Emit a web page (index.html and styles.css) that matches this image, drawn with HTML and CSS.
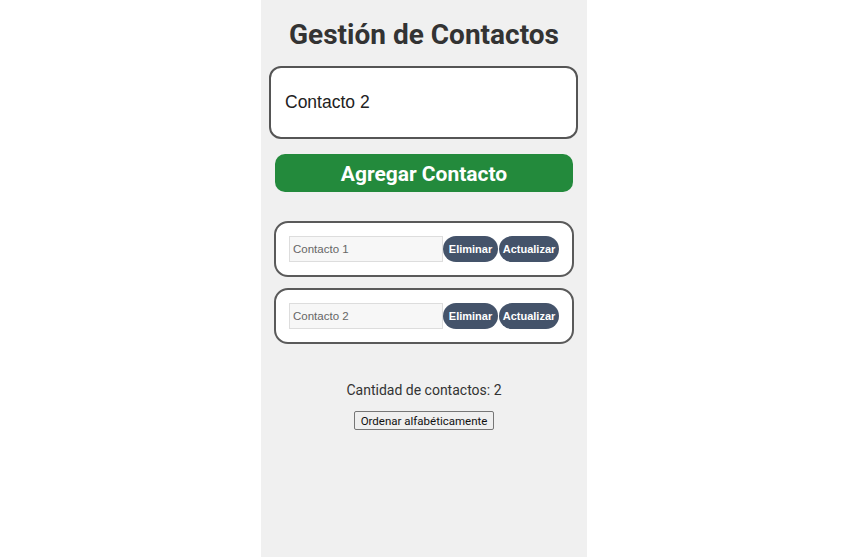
FILE: index.html
```html
<!DOCTYPE html>
<html lang="es">
<head>
<meta charset="utf-8">
<title>Gestión de Contactos</title>
<link rel="stylesheet" href="styles.css">
</head>
<body>
<div class="app">
  <h1 class="title">Gestión de Contactos</h1>
  <input class="new-input" type="text" value="Contacto 2">
  <button class="add-btn">Agregar Contacto</button>
  <ul class="list">
    <li class="card">
      <input class="name" type="text" value="Contacto 1">
      <button class="pill pill-del">Eliminar</button>
      <button class="pill pill-upd">Actualizar</button>
    </li>
    <li class="card">
      <input class="name" type="text" value="Contacto 2">
      <button class="pill pill-del">Eliminar</button>
      <button class="pill pill-upd">Actualizar</button>
    </li>
  </ul>
  <p class="count">Cantidad de contactos: 2</p>
  <div class="sort-row"><button class="sort-btn">Ordenar alfabéticamente</button></div>
</div>
</body>
</html>
```
FILE: styles.css
```css
html, body {
  margin: 0;
  padding: 0;
  background: #ffffff;
}
body {
  font-family: Roboto, "Liberation Sans", Arial, sans-serif;
}
.app {
  width: 326px;
  min-height: 557px;
  margin: 0 auto;
  background: #f0f0f0;
  display: flex;
  flex-direction: column;
  box-sizing: border-box;
  padding-top: 19px;
}
.title {
  margin: 0;
  font-size: 28px;
  line-height: 32px;
  font-weight: 700;
  color: #333333;
  text-align: center;
}
.new-input {
  margin: 15px 8px 0 8px;
  width: 309px;
  height: 73px;
  box-sizing: border-box;
  border: 2px solid #555555;
  border-radius: 12px;
  background: #ffffff;
  padding: 0 14px;
  font-family: "Liberation Sans", Arial, sans-serif;
  font-size: 17.5px;
  color: #222222;
  outline: none;
}
.add-btn {
  margin: 15px 14px 0 14px;
  width: 298px;
  height: 38px;
  border: none;
  border-radius: 10px;
  background: #238a3c;
  color: #ffffff;
  font-family: Roboto, "Liberation Sans", Arial, sans-serif;
  font-weight: 700;
  font-size: 21px;
  padding: 1px 0 0 0;
}
.list {
  list-style: none;
  margin: 29px 13px 0 13px;
  padding: 0;
  display: flex;
  flex-direction: column;
  gap: 11px;
}
.card {
  width: 300px;
  height: 56px;
  box-sizing: border-box;
  border: 2px solid #5a5a5a;
  border-radius: 14px;
  background: #ffffff;
  display: flex;
  align-items: center;
  padding: 0 13px;
}
.name {
  width: 154px;
  height: 26px;
  box-sizing: border-box;
  border: 1px solid #dddddd;
  background: #f7f7f7;
  padding: 0 3px;
  font-family: "Liberation Sans", Arial, sans-serif;
  font-size: 11.5px;
  color: #666666;
  outline: none;
}
.pill {
  height: 26px;
  border: none;
  border-radius: 13px;
  background: #44536a;
  color: #ffffff;
  font-family: "Liberation Sans", Arial, sans-serif;
  font-weight: 700;
  font-size: 11px;
  padding: 0;
  margin: 0;
  text-align: center;
}
.pill-del {
  width: 55px;
}
.pill-upd {
  width: 60px;
  margin-left: 1px;
}
.count {
  margin: 37px 0 0 0;
  text-align: center;
  font-size: 14px;
  line-height: 18px;
  color: #333333;
}
.sort-row {
  display: flex;
  justify-content: center;
  margin-top: 12px;
}
.sort-btn {
  font-family: Roboto, "Liberation Sans", Arial, sans-serif;
  font-size: 11.5px;
  line-height: 14px;
  height: 19px;
  padding: 0 6px;
  background: #efefef;
  border: 1px solid #767676;
  border-radius: 2px;
  color: #111111;
}
```
